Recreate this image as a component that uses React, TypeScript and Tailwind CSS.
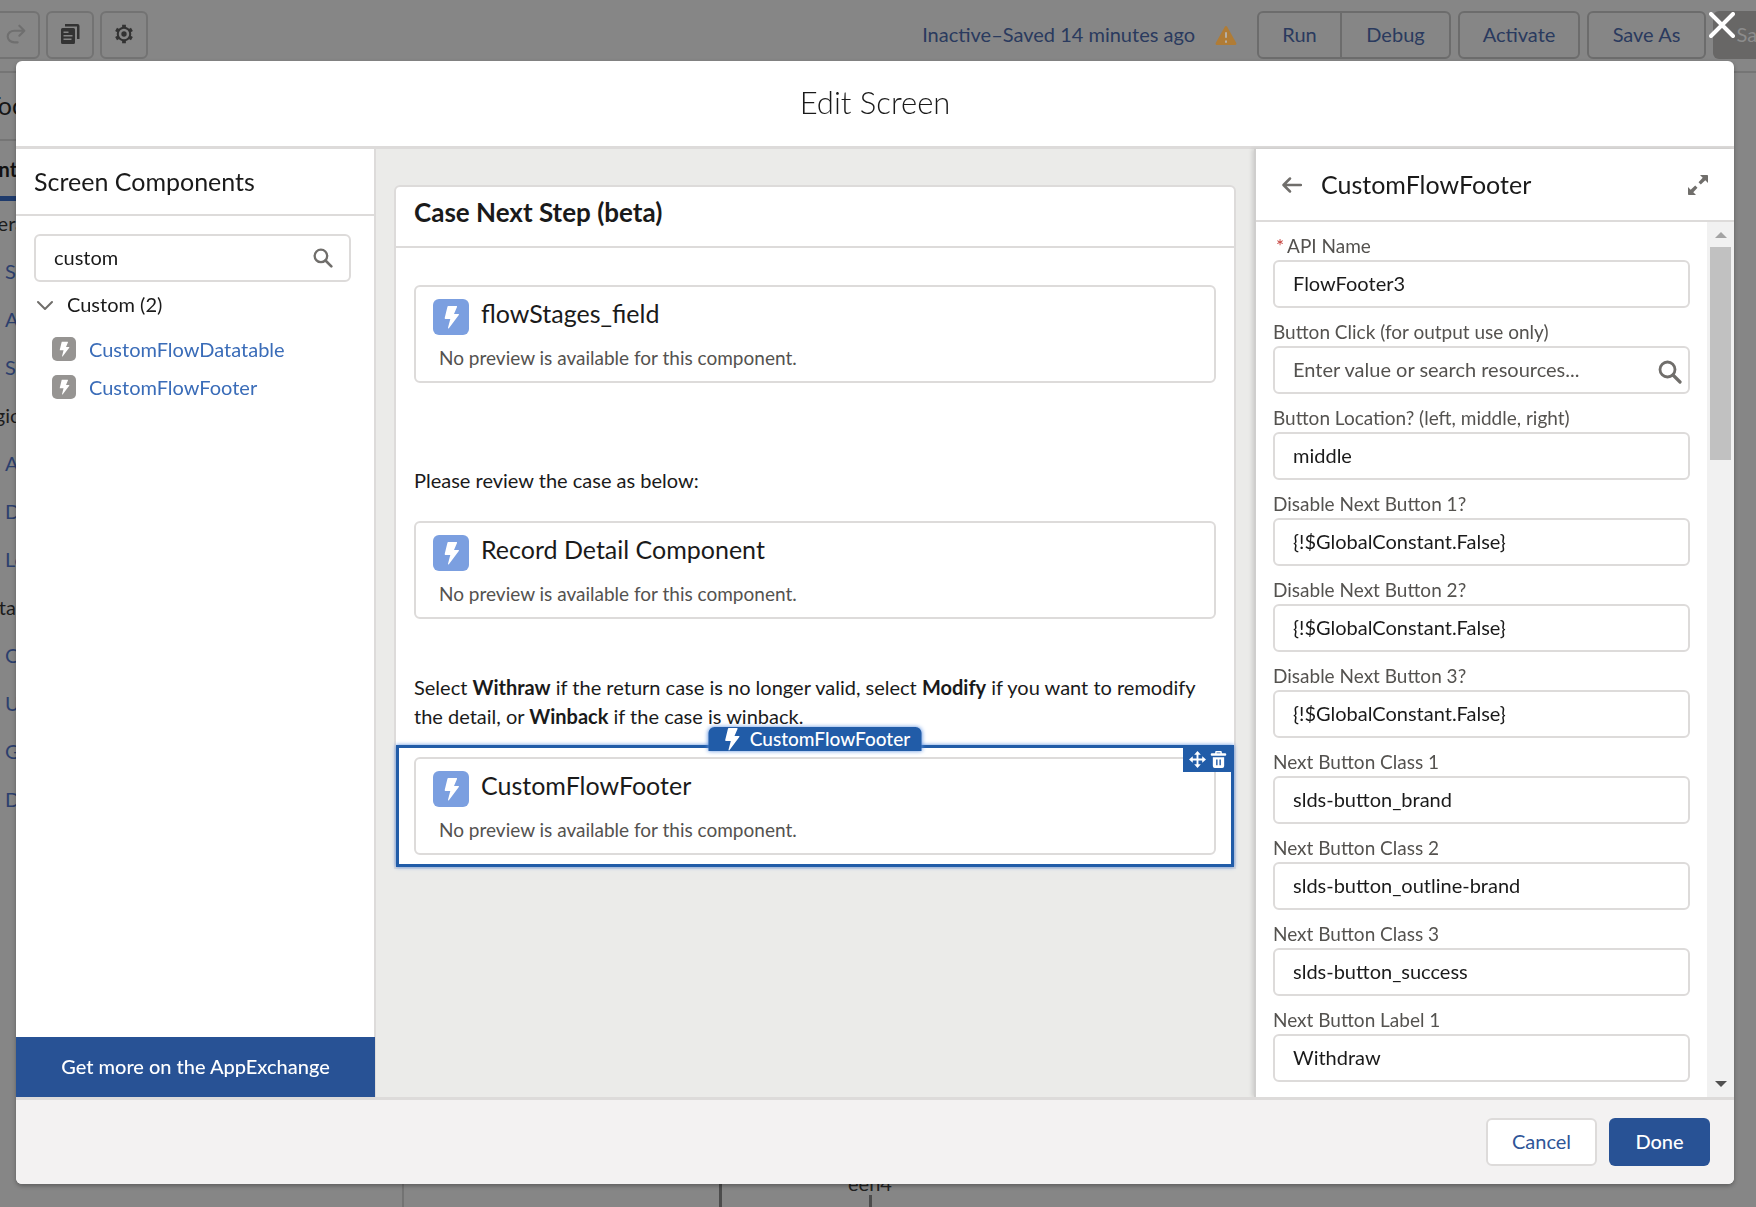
import type { ReactNode } from 'react'
import clsx from 'clsx'

const sidebar = [
  { title: 'Interaction', items: ['Screen', 'Action', 'Subflow'] },
  { title: 'Logic', items: ['Assignment', 'Decision', 'Loop'] },
  { title: 'Data', items: ['Create Records', 'Update Records', 'Get Records', 'Delete Records'] },
]

const fields = [
  { id: 'api-name', label: 'API Name', value: 'FlowFooter3', required: true },
  { id: 'button-click', label: 'Button Click (for output use only)', placeholder: 'Enter value or search resources...' },
  { id: 'button-location', label: 'Button Location? (left, middle, right)', value: 'middle' },
  { id: 'disable-1', label: 'Disable Next Button 1?', value: '{!$GlobalConstant.False}' },
  { id: 'disable-2', label: 'Disable Next Button 2?', value: '{!$GlobalConstant.False}' },
  { id: 'disable-3', label: 'Disable Next Button 3?', value: '{!$GlobalConstant.False}' },
  { id: 'class-1', label: 'Next Button Class 1', value: 'slds-button_brand' },
  { id: 'class-2', label: 'Next Button Class 2', value: 'slds-button_outline-brand' },
  { id: 'class-3', label: 'Next Button Class 3', value: 'slds-button_success' },
  { id: 'label-1', label: 'Next Button Label 1', value: 'Withdraw' },
]

function Bolt({ className }: { className?: string }) {
  return (
    <svg viewBox="0 0 24 24" className={className} fill="currentColor" aria-hidden="true">
      <path d="M9.200 1h8.200c.5 0 .8.5.6.9L15 9h4.300c.6 0 .9.7.5 1.100L9.900 23.200c-.4.4-1 .1-.9-.5l2.300-8.700H6.300c-.5 0-.8-.4-.6-.9L8.500 1.500c.1-.3.400-.5.700-.5z" />
    </svg>
  )
}

function SearchIcon({ className }: { className?: string }) {
  return (
    <svg viewBox="0 0 24 24" className={className} fill="none" stroke="#706e6b" aria-hidden="true">
      <circle cx="9.500" cy="9.500" r="7.500" strokeWidth="2.800" />
      <path d="M15 15l7 7" strokeWidth="3.200" strokeLinecap="round" />
    </svg>
  )
}

function ToolButton({ label, children }: { label: string; children: ReactNode }) {
  return (
    <button aria-label={label} className="flex size-12 shrink-0 items-center justify-center rounded-md border-2 border-[#737373] pb-[2px]">
      {children}
    </button>
  )
}

function Toolbar() {
  return (
    <header className="flex h-[73px] items-start justify-between border-b-2 border-[#757575] pt-[11px]">
      <div className="-ml-2 flex gap-[6px]">
        <ToolButton label="Redo">
          <svg viewBox="0 0 24 24" className="size-5" fill="none" stroke="#6f6f6f" strokeWidth="2.500" strokeLinecap="round" strokeLinejoin="round">
            <path d="M16 2l6 6-6 6M21 8H10a8 7 0 0 0 0 14h4" />
          </svg>
        </ToolButton>
        <ToolButton label="Copy">
          <svg viewBox="0 0 20 20" className="size-5" fill="#333">
            <path d="M5 0h12.500A2 2 0 0 1 19.500 2v13h-2.500V2.500H5z" />
            <path fillRule="evenodd" d="M2.500 4h11a1.500 1.500 0 0 1 1.500 1.500v13a1.500 1.500 0 0 1-1.500 1.500h-11A1.500 1.500 0 0 1 1 18.500v-13A1.500 1.500 0 0 1 2.500 4zM3.500 7.500v1.500h5V7.500zM3.500 11v1.500h9V11zM3.500 14.500V16h8v-1.500z" />
          </svg>
        </ToolButton>
        <ToolButton label="Settings">
          <svg viewBox="0 0 24 24" className="size-5" fill="none" stroke="#333">
            <circle cx="12" cy="12" r="7.500" strokeWidth="2.500" />
            <circle cx="12" cy="12" r="3.200" fill="#333" stroke="none" />
            <path d="M12 4.500V1M12 19.500V23M5.500 8.200L2.500 6.500M18.500 15.800l3 1.700M5.500 15.800l-3 1.700M18.500 8.200l3-1.700" strokeWidth="4.500" />
          </svg>
        </ToolButton>
      </div>

      <div className="-mr-[25px] flex items-center text-xl text-[#2a3a5e]">
        <span className="pb-[2px]">Inactive–Saved 14 minutes ago</span>
        <svg viewBox="0 0 24 22" className="mx-5 h-5 w-[22px]">
          <path d="M12 1c.6 0 1 .3 1.300.8l10 18c.5.9 0 2.200-1.200 2.200H1.900C.7 22 .2 20.700.7 19.800l10-18C11 1.300 11.400 1 12 1z" fill="#b07c36" />
          <path d="M12 8v6M12 17v2.500" stroke="#b5aea4" strokeWidth="2.200" />
        </svg>
        <div className="mr-[7px] flex rounded-md border-2 border-[#6c6c6c]">
          <button className="h-11 w-[83px] border-r-2 border-[#6c6c6c] pb-[2px]">Run</button>
          <button className="h-11 w-[107px] pb-[2px]">Debug</button>
        </div>
        <button className="mr-[7px] h-12 w-[122px] rounded-md border-2 border-[#6c6c6c] pb-[2px]">Activate</button>
        <button className="mr-[7px] h-12 w-[119px] rounded-md border-2 border-[#6c6c6c] pb-[2px]">Save As</button>
        <button className="h-12 w-[68px] rounded-md bg-[#686766] pb-[2px] pl-5 text-[#8c8c8c]">Save</button>
      </div>
    </header>
  )
}

function Toolbox() {
  return (
    <aside className="w-[404px] shrink-0 border-r-2 border-[#737373] text-xl">
      <div className="-ml-[26px]">
        <h2 className="flex h-[68px] items-center border-b-2 border-[#757575] pb-[2px] pl-3 text-[25px] text-[#161616]">Toolbox</h2>
        <div className="flex h-[60px] items-center border-b-[5px] border-[#1f3b6c] font-bold text-[#111]">
          <span className="-ml-[30px]">Elements</span>
        </div>
        {sidebar.map((group) => (
          <section key={group.title}>
            <h3 className="flex h-12 items-center pb-1 text-[#1c1c1c]">{group.title}</h3>
            <ul>
              {group.items.map((item) => (
                <li key={item} className="flex h-12 items-center pb-1 pl-[31px] text-[#2c3f6d]">{item}</li>
              ))}
            </ul>
          </section>
        ))}
      </div>
    </aside>
  )
}

function FlowCanvas() {
  return (
    <div className="flex flex-1 flex-col justify-end overflow-hidden">
      <div className="flex h-9 items-end pl-[315px]">
        <div className="h-full w-[3px] bg-[#4c4c4c]" />
        <div className="ml-[78px] flex w-[140px] flex-col items-center">
          <span className="text-xl leading-6 text-[#222]">een4</span>
          <span className="h-3 w-[3px] bg-[#4c4c4c]" />
        </div>
      </div>
    </div>
  )
}

function ComponentPalette() {
  return (
    <section className="flex w-[360px] shrink-0 flex-col border-r-2 border-[#dddbda] bg-white">
      <h2 className="flex h-[67px] items-center border-b-2 border-[#dddbda] px-[18px] text-[25px]">Screen Components</h2>
      <div className="flex-1 pt-[18px]">
        <div className="relative mx-[18px] w-[317px]">
          <input aria-label="Search components" defaultValue="custom" className="h-12 w-full rounded-md border-2 border-[#dddbda] px-[18px] pb-[2px] text-xl outline-none" />
          <SearchIcon className="absolute top-[14px] right-[18px] size-5" />
        </div>
        <button className="flex h-12 w-full items-center gap-[14px] pb-1 pl-[21px] text-xl">
          <svg viewBox="0 0 16 16" className="size-4" fill="none" stroke="#706e6b" strokeWidth="2" strokeLinecap="round" strokeLinejoin="round">
            <path d="M1 6l7 7 7-7" />
          </svg>
          Custom (2)
        </button>
        <ul>
          {['CustomFlowDatatable', 'CustomFlowFooter'].map((name) => (
            <li key={name} className="flex h-[38px] items-center gap-[13px] pl-9">
              <span className="flex size-6 items-center justify-center rounded-[5px] bg-[#969492] text-white">
                <Bolt className="size-4" />
              </span>
              <a href="#" className="text-xl text-[#3a6cb8]">{name}</a>
            </li>
          ))}
        </ul>
      </div>
      <button className="-mr-px h-[60px] bg-[#285295] pb-[2px] text-xl font-medium text-white">Get more on the AppExchange</button>
    </section>
  )
}

function PreviewBox({ title }: { title: string }) {
  return (
    <div className="h-[98px] rounded-md border-2 border-[#dddbda] bg-white px-[17px] pt-3">
      <div className="flex gap-3">
        <span className="flex size-9 items-center justify-center rounded-md bg-[#7b9fe0] text-white">
          <Bolt className="size-6" />
        </span>
        <h3 className="text-[25px] leading-7">{title}</h3>
      </div>
      <p className="mt-[9px] pl-[6px] text-[19px] leading-7 text-[#54524f]">No preview is available for this component.</p>
    </div>
  )
}

function ScreenCanvas() {
  return (
    <main className="flex-1 overflow-hidden bg-[#ebebe9] px-[18px] pt-9">
      <div className="rounded-t-md border-2 border-[#dddbda] bg-white">
        <h2 className="h-[61px] border-b-2 border-[#dddbda] px-[18px] pt-[7px] text-[26px] leading-9 font-bold">Case Next Step (beta)</h2>
        <div className="px-[18px] pt-[37px]">
          <PreviewBox title="flowStages_field" />
          <p className="mt-[83px] mb-[26px] text-xl leading-[29px]">Please review the case as below:</p>
          <PreviewBox title="Record Detail Component" />
          <p className="mt-[54px] mb-[14px] text-xl leading-[29px]">
            Select <b>Withraw</b> if the return case is no longer valid, select <b>Modify</b> if you want to remodify the detail, or <b>Winback</b> if the case is winback.
          </p>
        </div>
        <div className="relative border-[3px] border-[#215ca8] px-[15px] py-[9px] shadow-[0_0_4px_#5a8fe0]">
          <PreviewBox title="CustomFlowFooter" />
          <div className="absolute -top-[21px] left-1/2 flex h-6 w-[213px] -translate-x-1/2 items-center justify-center gap-[6px] rounded-t-md bg-[#215ca8] text-[19px] font-medium text-white shadow-[0_0_4px_#5a8fe0]">
            <Bolt className="size-6" />
            CustomFlowFooter
          </div>
          <div className="absolute -top-[2px] -right-px flex h-[26px] w-[49px] items-center justify-center gap-1 bg-[#215ca8] text-white">
            <button aria-label="Move">
              <svg viewBox="0 0 18 18" className="size-[17px]" fill="currentColor">
                <path d="M9 0l3.500 4H10v4h4V5.500L18 9l-4 3.500V10h-4v4h2.500L9 18l-3.500-4H8v-4H4v2.500L0 9l4-3.500V8h4V4H5.500z" />
              </svg>
            </button>
            <button aria-label="Delete">
              <svg viewBox="0 0 18 18" className="size-[17px]" fill="currentColor">
                <path fillRule="evenodd" d="M6.500 0h5a1 1 0 0 1 1 1v1.500H16a.7.7 0 0 1 0 2.500H2a.7.7 0 0 1 0-2.500h3.500V1a1 1 0 0 1 1-1zM7 1.500v1h4v-1zM3 6.500h12V16a2 2 0 0 1-2 2H5a2 2 0 0 1-2-2zM6.500 9v6H8V9zM10 9v6h1.500V9z" />
              </svg>
            </button>
          </div>
        </div>
      </div>
    </main>
  )
}

function PropertyPanel() {
  return (
    <section className="flex w-[480px] shrink-0 flex-col border-l-2 border-[#cfcecd] bg-white shadow-[-2px_0_4px_rgba(0,0,0,0.12)]">
      <div className="flex h-[73px] items-center border-b-2 border-[#dddbda] px-[26px]">
        <button aria-label="Back">
          <svg viewBox="0 0 20 16" className="h-4 w-5" fill="none" stroke="#706e6b" strokeWidth="2.500" strokeLinecap="round" strokeLinejoin="round">
            <path d="M8 1.500L1.500 8 8 14.500M2 8h17" />
          </svg>
        </button>
        <h2 className="ml-[19px] flex-1 text-[25px]">CustomFlowFooter</h2>
        <button aria-label="Expand">
          <svg viewBox="0 0 20 20" className="size-5" fill="#706e6b">
            <path d="M12 0h7.200a.8.8 0 0 1 .8.8V8l-2.700-2.700-4.500 4.200-2.300-2.300 4.200-4.500zM8 20H.8a.8.8 0 0 1-.8-.8V12l2.700 2.700 4.500-4.200 2.300 2.300-4.200 4.500z" />
          </svg>
        </button>
      </div>
      <div className="flex min-h-0 flex-1">
        <div className="flex flex-1 flex-col gap-3 overflow-hidden px-[17px] pt-3">
          {fields.map((field) => (
            <div key={field.id} className="relative shrink-0">
              <label htmlFor={field.id} className="mb-[2px] block text-[19px] leading-6 text-[#54524f]">
                {field.required && <span className="mx-[3px] text-[#c23934]">*</span>}
                {field.label}
              </label>
              <input
                id={field.id}
                defaultValue={field.value}
                placeholder={field.placeholder}
                className={clsx('block h-12 w-full rounded-md border-2 border-[#dddbda] px-[18px] pb-[2px] text-xl outline-none placeholder:text-[#54524f]', field.placeholder && 'pr-12')}
              />
              {field.placeholder && <SearchIcon className="absolute right-2 bottom-[10px] size-6" />}
            </div>
          ))}
        </div>
        {/* scrollbar */}
        <div className="flex w-[27px] flex-col items-center bg-[#f1f1f1] pt-[10px] pb-[10px]">
          <svg viewBox="0 0 12 6" className="h-[6px] w-3"><path d="M6 0l6 6H0z" fill="#a3a3a3" /></svg>
          <div className="mt-[9px] h-[213px] w-[21px] bg-[#c1c1c1]" />
          <svg viewBox="0 0 12 6" className="mt-auto h-[6px] w-3"><path d="M0 0h12L6 6z" fill="#505050" /></svg>
        </div>
      </div>
    </section>
  )
}

function EditScreenModal() {
  return (
    <div className="fixed inset-0 pt-[61px] pr-[22px] pb-[23px] pl-4">
      <button aria-label="Close" className="absolute top-3 right-[21px] text-white">
        <svg viewBox="0 0 26 26" className="size-[26px]" fill="none" stroke="currentColor" strokeWidth="4" strokeLinecap="round">
          <path d="M2 2l22 22M24 2L2 24" />
        </svg>
      </button>
      <div role="dialog" aria-labelledby="modal-title" className="flex h-full flex-col overflow-hidden rounded-md bg-white shadow-[0_2px_4px_rgba(0,0,0,0.3)]">
        <h1 id="modal-title" className="flex h-[88px] shrink-0 items-center justify-center border-b-[3px] border-[#dddbda] pb-[2px] text-[31px] font-light">Edit Screen</h1>
        <div className="flex min-h-0 flex-1">
          <ComponentPalette />
          <ScreenCanvas />
          <PropertyPanel />
        </div>
        <footer className="flex h-[87px] shrink-0 items-center justify-end gap-3 border-t-[3px] border-[#dddbda] bg-[#f3f2f2] pr-6 text-xl">
          <button className="h-12 w-[111px] rounded-md border-2 border-[#dddbda] bg-white pb-[2px] text-[#2f5597]">Cancel</button>
          <button className="h-12 w-[101px] rounded-md bg-[#285295] pb-[2px] font-medium text-white">Done</button>
        </footer>
      </div>
    </div>
  )
}

export default function App() {
  return (
    <div className="flex h-screen flex-col overflow-hidden bg-[#868686] font-['Lato','Open_Sans',sans-serif] text-[#1a1a1a]">
      <Toolbar />
      <div className="flex min-h-0 flex-1">
        <Toolbox />
        <FlowCanvas />
      </div>
      <EditScreenModal />
    </div>
  )
}
